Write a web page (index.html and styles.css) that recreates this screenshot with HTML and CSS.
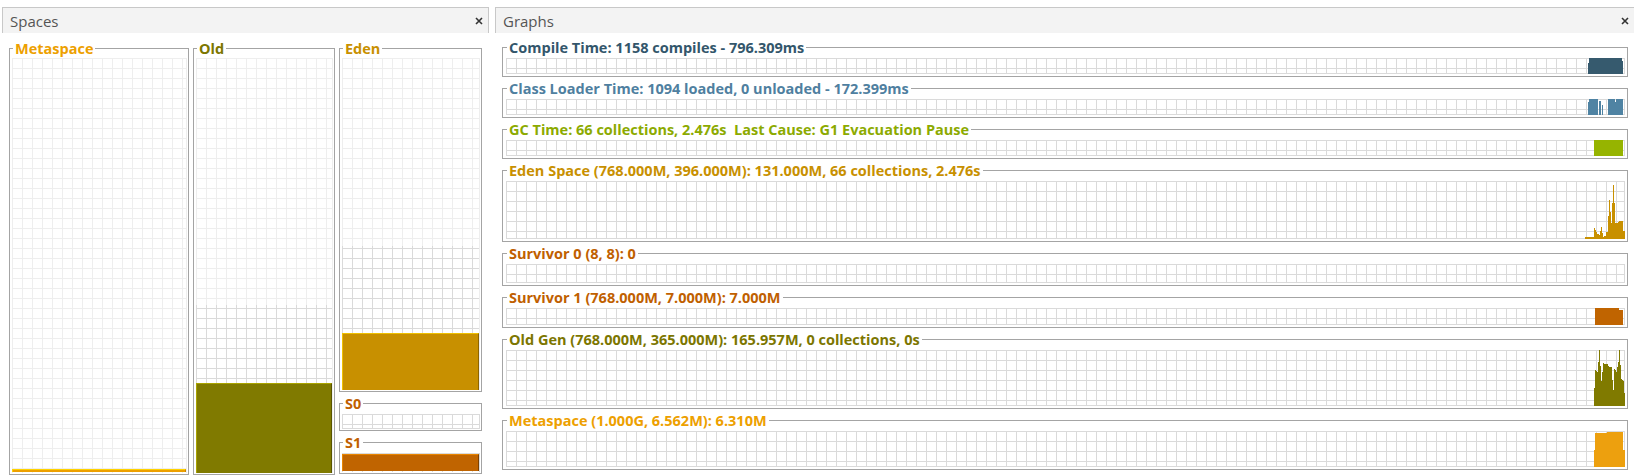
FILE: index.html
```html
<!DOCTYPE html>
<html>
<head>
<meta charset="utf-8">
<link rel="stylesheet" href="styles.css">
</head>
<body>
<div class="app">
  <section class="panel spaces">
    <header class="tab">
      <span class="tab-title">Spaces</span>
      <svg class="close" width="8" height="8" viewBox="0 0 8 8"><path d="M1 1L7 7M7 1L1 7"/></svg>
    </header>
    <div class="spaces-body">
      <fieldset class="box space meta">
        <legend>Metaspace</legend>
        <div class="sgrid">
          <div class="free"></div>
          <div class="fill fill-meta"></div>
        </div>
      </fieldset>
      <fieldset class="box space old">
        <legend>Old</legend>
        <div class="sgrid">
          <div class="free"></div>
          <div class="committed c-old" style="height:78px"></div>
          <div class="fill fill-old" style="height:90px"></div>
        </div>
      </fieldset>
      <div class="stack">
        <fieldset class="box space eden">
          <legend>Eden</legend>
          <div class="sgrid">
            <div class="free"></div>
            <div class="committed c-eden" style="height:87px"></div>
            <div class="fill fill-eden" style="height:57px"></div>
          </div>
        </fieldset>
        <fieldset class="box space s0">
          <legend>S0</legend>
          <div class="sgrid"></div>
        </fieldset>
        <fieldset class="box space s1">
          <legend>S1</legend>
          <div class="sgrid">
            <div class="free"></div>
            <div class="fill fill-s1" style="height:17px"></div>
          </div>
        </fieldset>
      </div>
    </div>
  </section>

  <section class="panel graphs">
    <header class="tab">
      <span class="tab-title">Graphs</span>
      <svg class="close" width="8" height="8" viewBox="0 0 8 8"><path d="M1 1L7 7M7 1L1 7"/></svg>
    </header>
    <div class="graphs-body">
      <fieldset class="box gbox g-compile">
        <legend>Compile Time: 1158 compiles - 796.309ms</legend>
        <div class="ggrid">
          <svg class="chart" width="42" height="100%"><svg y="100%" overflow="visible">
            <polygon class="c-compile" points="6,1 6,-10 7,-10 7,-15 40,-15 40,-12 41,-12 41,1"/>
          </svg></svg>
        </div>
      </fieldset>
      <fieldset class="box gbox g-class">
        <legend>Class Loader Time: 1094 loaded, 0 unloaded - 172.399ms</legend>
        <div class="ggrid">
          <svg class="chart" width="42" height="100%"><svg y="100%" overflow="visible">
            <polygon class="c-class" points="6,1 6,-12 7,-12 7,-15 16,-15 16,1"/>
            <polygon class="c-class" points="17,1 17,-13 19,-13 19,1"/>
            <polygon class="c-class" points="20,1 20,-9 21,-9 21,1"/>
            <polygon class="c-class" points="26,1 26,-15 33,-15 33,-12 34,-12 34,-15 41,-15 41,1"/>
          </svg></svg>
        </div>
      </fieldset>
      <fieldset class="box gbox g-gc">
        <legend>GC Time: 66 collections, 2.476s&nbsp; Last Cause: G1 Evacuation Pause</legend>
        <div class="ggrid">
          <svg class="chart" width="42" height="100%"><svg y="100%" overflow="visible">
            <polygon class="c-gc" points="12,1 12,-15 41,-15 41,1"/>
          </svg></svg>
        </div>
      </fieldset>
      <fieldset class="box gbox g-eden">
        <legend>Eden Space (768.000M, 396.000M): 131.000M, 66 collections, 2.476s</legend>
        <div class="ggrid">
          <svg class="chart" width="42" height="100%"><svg y="100%" overflow="visible">
            <polygon class="c-eden" points="3,1 3,-1 12,-1 12,-10 13,-10 13,-8 14,-8 14,-6 15,-6 15,-4 17,-4 17,-3 18,-3 18,-7 19,-7 19,-11 20,-11 20,-5 21,-5 21,-1 22,-1 22,-2 24,-2 24,-6 26,-6 26,-22 27,-22 27,-38 28,-38 28,-26 29,-26 29,-15 30,-15 30,-35 31,-35 31,-53 32,-53 32,-35 33,-35 33,-15 36,-15 36,-16 37,-16 37,-17 41,-17 41,-7 43,-7 43,1"/>
          </svg></svg>
        </div>
      </fieldset>
      <fieldset class="box gbox g-s0">
        <legend>Survivor 0 (8, 8): 0</legend>
        <div class="ggrid"></div>
      </fieldset>
      <fieldset class="box gbox g-s1">
        <legend>Survivor 1 (768.000M, 7.000M): 7.000M</legend>
        <div class="ggrid">
          <svg class="chart" width="42" height="100%"><svg y="100%" overflow="visible">
            <polygon class="c-s1" points="13,1 13,-16 37,-16 37,-14 41,-14 41,1"/>
          </svg></svg>
        </div>
      </fieldset>
      <fieldset class="box gbox g-old">
        <legend>Old Gen (768.000M, 365.000M): 165.957M, 0 collections, 0s</legend>
        <div class="ggrid">
          <svg class="chart" width="42" height="100%"><svg y="100%" overflow="visible">
            <polygon class="c-old" points="12,1 12,-17 13,-17 13,-35 14,-35 14,-34 15,-34 15,-33 16,-33 16,-43 17,-43 17,-55 18,-55 18,-39 19,-39 19,-24 20,-24 20,-33 21,-33 21,-42 22,-42 22,-41 26,-41 26,-39 27,-39 27,-38 30,-38 30,-25 31,-25 31,-15 32,-15 32,-36 33,-36 33,-35 34,-35 34,-33 35,-33 35,-38 36,-38 36,-43 37,-43 37,-55 38,-55 38,-40 39,-40 39,-26 40,-26 40,-25 41,-25 41,-24 42,-24 42,-12 43,-12 43,1"/>
          </svg></svg>
        </div>
      </fieldset>
      <fieldset class="box gbox g-meta">
        <legend>Metaspace (1.000G, 6.562M): 6.310M</legend>
        <div class="ggrid">
          <svg class="chart" width="42" height="100%"><svg y="100%" overflow="visible">
            <polygon class="c-meta" points="12,1 12,-16 13,-16 13,-33 25,-33 25,-34 41,-34 41,-16 43,-16 43,1"/>
          </svg></svg>
        </div>
      </fieldset>
    </div>
  </section>
</div>
</body>
</html>
```

FILE: styles.css
```css
* { box-sizing: border-box; }

html, body {
  margin: 0;
  background: #ffffff;
}

body {
  font-family: "Open Sans", "DejaVu Sans", sans-serif;
  width: 1634px;
  height: 475px;
  overflow: hidden;
}

.app {
  display: flex;
  padding-top: 7px;
  height: 475px;
}

.panel {
  display: flex;
  flex-direction: column;
}

.spaces {
  margin-left: 2px;
  width: 487px;
}

.graphs {
  margin-left: 6px;
  flex: 1;
}

/* ---------- tab header ---------- */
.tab {
  height: 26px;
  flex: none;
  background: #f3f3f3;
  border: 1px solid #c8c8c8;
  border-bottom: none;
  display: flex;
  align-items: center;
  justify-content: space-between;
  padding: 0 5px 0 7px;
}

.graphs .tab {
  border-right: none;
}

.tab-title {
  font-size: 15px;
  line-height: 20px;
  color: #555555;
}

.close {
  display: block;
  margin-top: 1px;
}

.close path {
  stroke: #333333;
  stroke-width: 1.6;
  fill: none;
}

/* ---------- titled boxes ---------- */
fieldset.box {
  margin: 0;
  min-width: 0;
  border: 1px solid #a4a4a4;
}

fieldset.box legend {
  font-weight: 700;
  font-size: 14.5px;
  line-height: 15px;
  padding: 0 2px;
  margin-left: 1px;
  white-space: nowrap;
}

/* ---------- spaces panel ---------- */
.spaces-body {
  flex: 1;
  display: grid;
  grid-template-columns: 180px 142px 143px;
  align-items: start;
  column-gap: 4px;
  padding: 8px 0 0 7px;
}

.stack {
  display: flex;
  flex-direction: column;
  gap: 4px;
}

.space {
  padding: 2px 1px 1px 2px;
}

.meta legend { color: #eda000; }
.old legend { color: #7c7600; }
.eden legend { color: #c89000; }
.s0 legend, .s1 legend { color: #c06000; }

.sgrid {
  display: flex;
  flex-direction: column;
  border-right: 1px solid #eeeeee;
  background-image:
    linear-gradient(90deg, #eeeeee 1px, transparent 1px),
    linear-gradient(#eeeeee 1px, transparent 1px);
  background-size: 10px 10px;
}

.meta .sgrid,
.old .sgrid { height: 415px; }
.eden .sgrid { height: 332px; }

.s0 .sgrid {
  height: 15px;
  margin-top: 1px;
  border-bottom: 1px solid #dadada;
  border-right-color: #dadada;
  background-image:
    linear-gradient(90deg, #dadada 1px, transparent 1px),
    linear-gradient(#dadada 1px, transparent 1px);
}

.s1 .sgrid {
  height: 19px;
  margin-top: 1px;
  border-right-color: #dadada;
  background-image:
    linear-gradient(90deg, #dadada 1px, transparent 1px),
    linear-gradient(#dadada 1px, transparent 1px);
}

.free { flex: 1; }

.committed {
  flex: none;
  background-image:
    linear-gradient(90deg, #dadada 1px, transparent 1px),
    linear-gradient(#dadada 1px, transparent 1px);
  background-size: 10px 10px;
}

.c-old { background-position: 0 3px; }
.c-eden { background-position: 0 2px; }

.fill {
  flex: none;
  border-style: solid;
  border-width: 1px 1px 0 1px;
}

.fill-meta {
  height: 3px;
  background: #eda000;
  border-color: #ffd200 #c88400 #c88400 #ffd200;
  margin-bottom: 1px;
}

.fill-old {
  background: #807a00;
  border-color: #aaa400 #595500 #595500 #aaa400;
}

.fill-eden {
  background: #c89000;
  border-color: #f0c000 #8c6400 #8c6400 #f0c000;
}

.fill-s1 {
  background: #c06400;
  border-color: #e88400 #7c4000 #7c4000 #e88400;
  margin-bottom: 1px;
}

/* ---------- graphs panel ---------- */
.graphs-body {
  flex: 1;
  display: flex;
  flex-direction: column;
  gap: 4px;
  padding: 7px 6px 0 7px;
}

.gbox {
  flex: none;
  padding: 3px 2px 2px 3px;
}

.ggrid {
  display: flex;
  justify-content: flex-end;
  border-right: 1px solid #dadada;
  border-bottom: 1px solid #dadada;
  background-image:
    linear-gradient(90deg, #dadada 1px, transparent 1px),
    linear-gradient(#dadada 1px, transparent 1px);
  background-size: 10px 10px;
}

.g-compile .ggrid,
.g-class .ggrid,
.g-gc .ggrid { height: 16px; }
.g-eden .ggrid { height: 58px; }
.g-s0 .ggrid { height: 19px; }
.g-s1 .ggrid { height: 17px; }
.g-old .ggrid { height: 56px; }
.g-meta .ggrid { height: 36px; }

.g-compile legend { color: #33566b; }
.g-class legend { color: #4f7fa0; }
.g-gc legend { color: #8caa00; }
.g-eden legend { color: #c89000; }
.g-s0 legend, .g-s1 legend { color: #c06000; }
.g-old legend { color: #7c7600; }
.g-meta legend { color: #eda000; }

.chart {
  display: block;
  flex: none;
  overflow: visible;
}

.c-compile { fill: #365a6e; }
.c-class { fill: #4f83a3; }
.c-gc { fill: #96b400; }
.c-eden { fill: #c89000; }
.c-s1 { fill: #c06400; }
.c-old { fill: #807a00; }
.c-meta { fill: #eda00e; }
```
